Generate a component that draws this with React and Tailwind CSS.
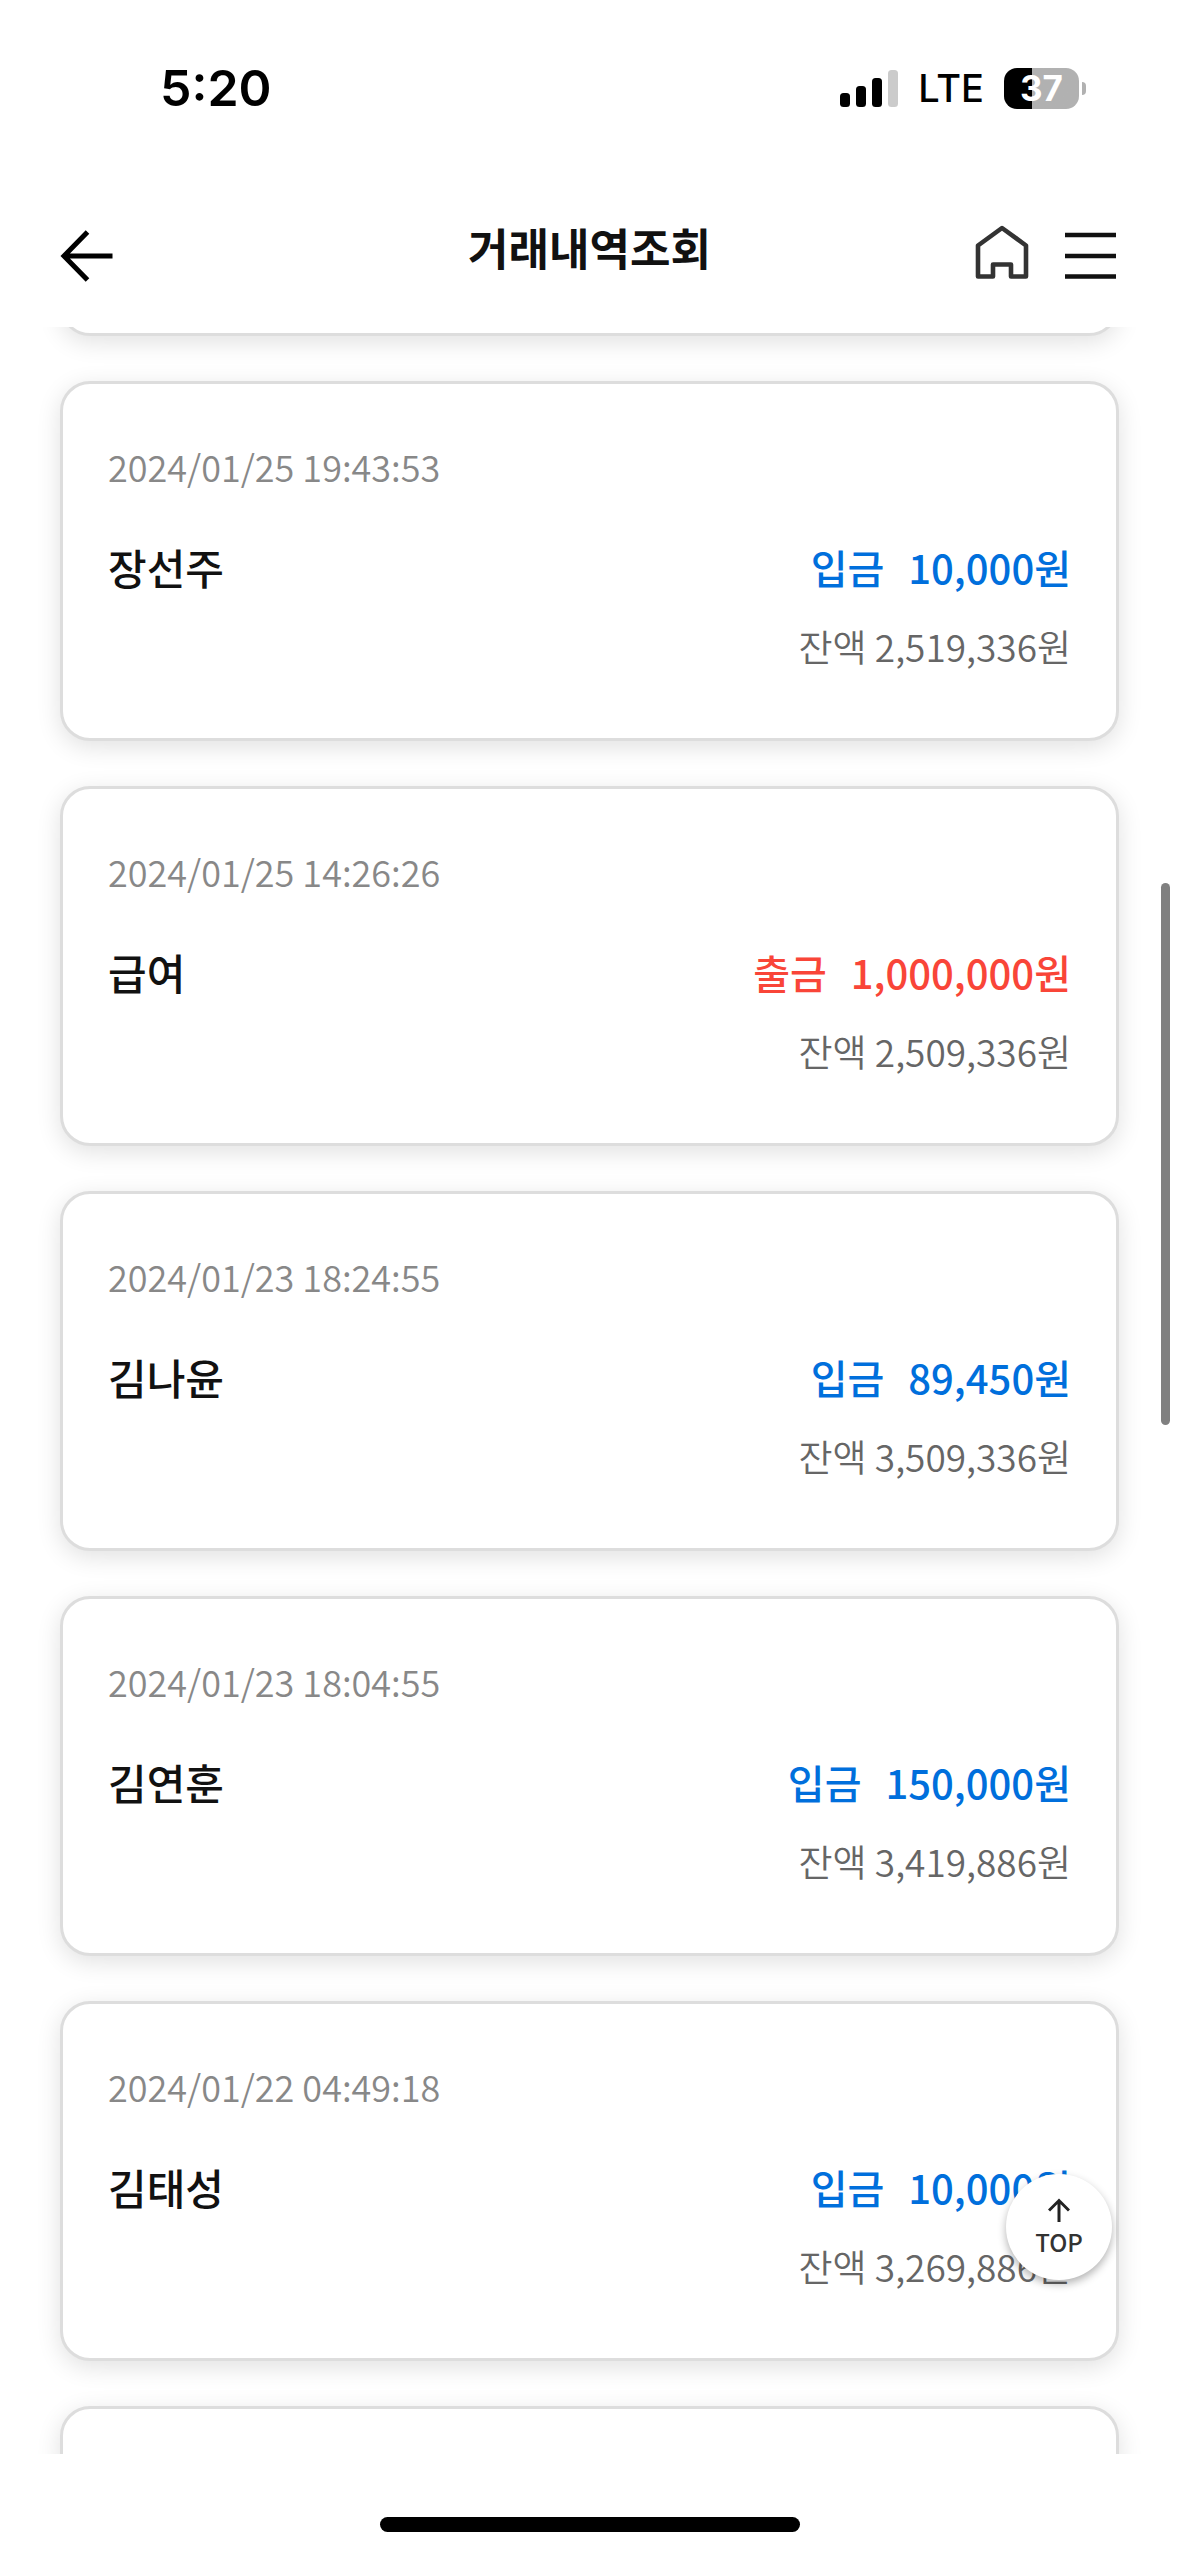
const transactions = [
  { date: "2024/01/25 19:43:53", name: "장선주", type: "deposit", amount: "10,000", balance: "2,519,336" },
  { date: "2024/01/25 14:26:26", name: "급여", type: "withdrawal", amount: "1,000,000", balance: "2,509,336" },
  { date: "2024/01/23 18:24:55", name: "김나윤", type: "deposit", amount: "89,450", balance: "3,509,336" },
  { date: "2024/01/23 18:04:55", name: "김연훈", type: "deposit", amount: "150,000", balance: "3,419,886" },
  { date: "2024/01/22 04:49:18", name: "김태성", type: "deposit", amount: "10,000", balance: "3,269,886" },
]

const StatusBar = () => (
  <div className="flex h-44 items-center justify-between pr-[93px] pl-40 font-['Inter',sans-serif] text-black">
    <span className="text-[50px] leading-none font-semibold">5:20</span>
    <div className="flex items-center">
      <svg className="h-[37px] w-[58px]" viewBox="0 0 58 37" fill="currentColor" aria-hidden="true">
        <rect x="0" y="23" width="10" height="14" rx="3.5" />
        <rect x="16" y="16" width="10" height="21" rx="3.5" />
        <rect x="32" y="8" width="10" height="29" rx="3.5" />
        <rect x="48" y="0" width="10" height="37" rx="3.5" fill="#cbcbcb" />
      </svg>
      <span className="ml-5 text-[38px] leading-none font-medium">LTE</span>
      <div className="ml-5 flex items-center gap-[3px]">
        <div className="flex h-[41px] w-[75px] items-center justify-center rounded-[13px] bg-linear-to-r from-black from-[37%] to-[#b1b1b1] to-[37%] text-[35px] leading-none font-bold text-white">
          37
        </div>
        <div className="h-[13px] w-1 rounded-r-full bg-[#b1b1b1]" />
      </div>
    </div>
  </div>
)

const Header = () => (
  <header className="grid h-[151px] grid-cols-[1fr_auto_1fr] items-center px-[60px] pb-[10px]">
    <button type="button" aria-label="뒤로" className="justify-self-start pt-[18px]">
      <svg className="h-[52px] w-[53px]" viewBox="0 0 53 52" fill="none" stroke="#000" strokeWidth="5">
        <path d="M52.5 26H4M27.5 2L4 26l23.5 24" />
      </svg>
    </button>
    <h1 className="text-[44px] leading-[60px] font-bold text-[#111]">거래내역조회</h1>
    <div className="flex items-center gap-9 justify-self-end pt-[10px]">
      <a href="#home" aria-label="홈">
        <svg className="h-[54px] w-[54px]" viewBox="0 0 54 54" fill="none" stroke="#333" strokeWidth="4.6" strokeLinejoin="round">
          <path d="M27 3L3 20.5V51.5H18V39.5H36V51.5H51V20.5Z" />
        </svg>
      </a>
      <button type="button" aria-label="전체메뉴">
        <svg className="h-[54px] w-[54px]" viewBox="0 0 54 54" stroke="#111" strokeWidth="4.5">
          <path d="M0 10h51M0 31h51M0 51.5h51" />
        </svg>
      </button>
    </div>
  </header>
)

const TransactionItem = ({ transaction }) => {
  const { date, name, type, amount, balance } = transaction
  const isDeposit = type === "deposit"

  return (
    <li className="rounded-[30px] border-[3px] border-[#ddd] bg-white px-[45px] pt-[58px] pb-[68px] shadow-[0_6px_24px_rgba(0,0,0,0.12)]">
      <p className="text-[36px] leading-[48px] font-[350] text-[#888]">{date}</p>
      <div className="mt-[47px] flex items-center justify-between leading-[60px] font-medium">
        <p className="text-[42px] text-[#111]">{name}</p>
        <p className={`flex gap-6 text-[40px] ${isDeposit ? "text-[#006fdc]" : "text-[#f94538]"}`}>
          <span>{isDeposit ? "입금" : "출금"}</span>
          <span>{amount}원</span>
        </p>
      </div>
      <p className="mt-[25px] text-right text-[37px] leading-[48px] font-[350] text-[#666]">잔액 {balance}원</p>
    </li>
  )
}

const TransactionList = () => (
  <ul className="flex flex-col gap-[45px] px-[60px]">
    <li className="h-[9px]">
      <div className="-mt-[51px] h-[60px] rounded-[30px] border-[3px] border-[#ddd] bg-white shadow-[0_6px_24px_rgba(0,0,0,0.12)]" />
    </li>
    {transactions.map((transaction) => (
      <TransactionItem key={transaction.date} transaction={transaction} />
    ))}
    <li className="h-24 rounded-t-[30px] border-[3px] border-[#ddd] bg-white shadow-[0_6px_24px_rgba(0,0,0,0.12)]" />
  </ul>
)

const TopButton = () => (
  <button
    type="button"
    className="absolute right-[67px] bottom-[174px] flex size-[106px] flex-col items-center justify-center rounded-full bg-white text-[24px] leading-7 font-medium text-[#333] shadow-[0_4px_8px_rgba(0,0,0,0.3)]"
  >
    <svg className="mb-[6px] h-6 w-[22px]" viewBox="0 0 22 24" fill="none" stroke="#222" strokeWidth="3" aria-hidden="true">
      <path d="M11 24V2M1 12.5L11 2.5l10 10" />
    </svg>
    TOP
  </button>
)

const App = () => (
  <div className="flex h-screen flex-col overflow-hidden bg-white font-['Noto_Sans_CJK_KR',sans-serif]">
    <StatusBar />
    <Header />
    <main className="relative min-h-0 flex-1 overflow-hidden">
      <TransactionList />
      <div className="absolute top-[556px] right-[9px] h-[542px] w-[9px] rounded-full bg-[#808080]" />
      <TopButton />
    </main>
    <footer className="flex h-[102px] justify-center pt-[63px]">
      <div className="h-[15px] w-[420px] rounded-full bg-black" />
    </footer>
  </div>
)

export default App
